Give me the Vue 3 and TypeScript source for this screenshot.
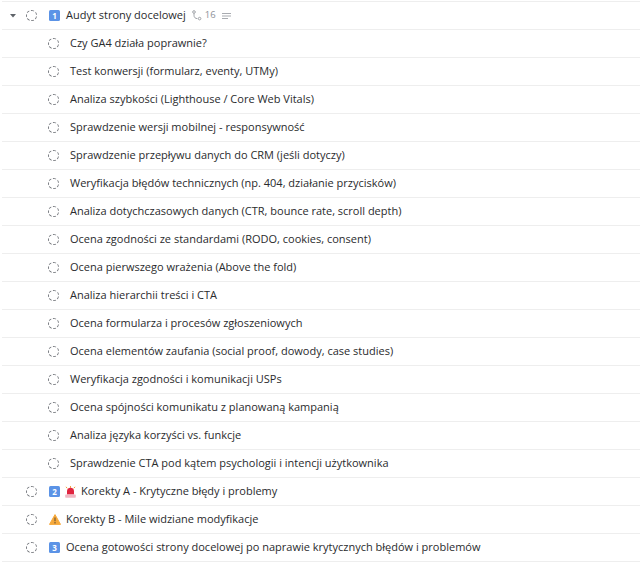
<script setup lang="ts">
interface Row { text: string }
const subtasks: Row[] = [
  'Czy GA4 działa poprawnie?',
  'Test konwersji (formularz, eventy, UTMy)',
  'Analiza szybkości (Lighthouse / Core Web Vitals)',
  'Sprawdzenie wersji mobilnej - responsywność',
  'Sprawdzenie przepływu danych do CRM (jeśli dotyczy)',
  'Weryfikacja błędów technicznych (np. 404, działanie przycisków)',
  'Analiza dotychczasowych danych (CTR, bounce rate, scroll depth)',
  'Ocena zgodności ze standardami (RODO, cookies, consent)',
  'Ocena pierwszego wrażenia (Above the fold)',
  'Analiza hierarchii treści i CTA',
  'Ocena formularza i procesów zgłoszeniowych',
  'Ocena elementów zaufania (social proof, dowody, case studies)',
  'Weryfikacja zgodności i komunikacji USPs',
  'Ocena spójności komunikatu z planowaną kampanią',
  'Analiza języka korzyści vs. funkcje',
  'Sprawdzenie CTA pod kątem psychologii i intencji użytkownika'
].map((text) => ({ text }))
</script>

<template>
  <div class="list">
    <div class="row top">
      <svg class="caret" width="6" height="4" viewBox="0 0 6 4"><path d="M0 0h6L3 3.6z" fill="#5f6369" /></svg>
      <span class="circle" />
      <span class="key">1</span>
      <span class="text">Audyt strony docelowej</span>
      <svg class="sub" width="10" height="11" viewBox="0 0 10 11" fill="none" stroke="#a0a3a8" stroke-width="1">
        <circle cx="2" cy="2" r="1.3" />
        <path d="M2 3.3v2c0 2 1.2 3.3 3.4 3.3" />
        <circle cx="7.6" cy="8.6" r="1.3" />
      </svg>
      <span class="count">16</span>
      <svg class="desc" width="9" height="6" viewBox="0 0 9 6" stroke="#a8abb0" stroke-width="1"><path d="M0 .5h9M0 3h9M0 5.5h6" /></svg>
    </div>
    <div v-for="s in subtasks" :key="s.text" class="row child">
      <span class="circle" />
      <span class="text">{{ s.text }}</span>
    </div>
    <div class="row parent">
      <span class="circle" />
      <span class="key">2</span>
      <svg class="emoji siren" width="11" height="12" viewBox="0 0 11 12">
        <path d="M5.5 0v1.8M1 .8l1.2 1.5M10 .8 8.8 2.3" stroke="#f2a33a" stroke-width="1" fill="none" />
        <path d="M2 8.6V5.2a3.5 3.5 0 0 1 7 0v3.4z" fill="#e0243f" />
        <rect x=".2" y="8.4" width="10.6" height="3.4" rx=".7" fill="#f0b6c2" />
      </svg>
      <span class="text">Korekty A - Krytyczne błędy i problemy</span>
    </div>
    <div class="row parent">
      <span class="circle" />
      <svg class="emoji warn" width="12" height="11" viewBox="0 0 12 11">
        <path d="M6 .6 11.5 10.4H.5z" fill="#f6a93b" stroke="#f6a93b" stroke-linejoin="round" />
        <path d="M6 3.4v3.8M6 8.1v1.3" stroke="#6b5233" stroke-width="1.1" />
      </svg>
      <span class="text">Korekty B - Mile widziane modyfikacje</span>
    </div>
    <div class="row parent">
      <span class="circle" />
      <span class="key">3</span>
      <span class="text">Ocena gotowości strony docelowej po naprawie krytycznych błędów i problemów</span>
    </div>
  </div>
</template>

<style scoped>
.list {
  width: 638px;
  margin: 1px 0 0 2px;
  border-top: 1px solid #eeeeee;
  font-family: "Open Sans", "Noto Sans", sans-serif;
  font-size: 11px;
  color: #2a2b2d;
}
.row {
  height: 27px;
  border-bottom: 1px solid #eeeeee;
  display: flex;
  align-items: center;
}
.text { margin-bottom: 2px; }
.row.top { padding-left: 7.5px; }
.row.child { padding-left: 46px; }
.row.parent { padding-left: 24px; }
.caret { margin-right: 10.5px; }
.circle {
  width: 11px;
  height: 11px;
  flex: none;
  box-sizing: border-box;
  border: 1px dashed #7b7e83;
  border-radius: 50%;
}
.child .text { margin-left: 11px; }
.key {
  width: 11px;
  height: 11px;
  margin-left: 12px;
  flex: none;
  border-radius: 1.5px;
  background: #5b93e6;
  color: #fff;
  font-size: 8px;
  font-weight: 700;
  line-height: 11px;
  text-align: center;
}
.key + .text { margin-left: 6px; }
.key + .emoji { margin-left: 5px; }
.siren + .text { margin-left: 5px; }
.warn { margin-left: 12px; }
.warn + .text { margin-left: 5px; }
.sub { margin-left: 6px; }
.count { margin-left: 3px; margin-bottom: 2px; font-size: 9.5px; color: #8d9096; }
.desc { margin-left: 6px; }
</style>
